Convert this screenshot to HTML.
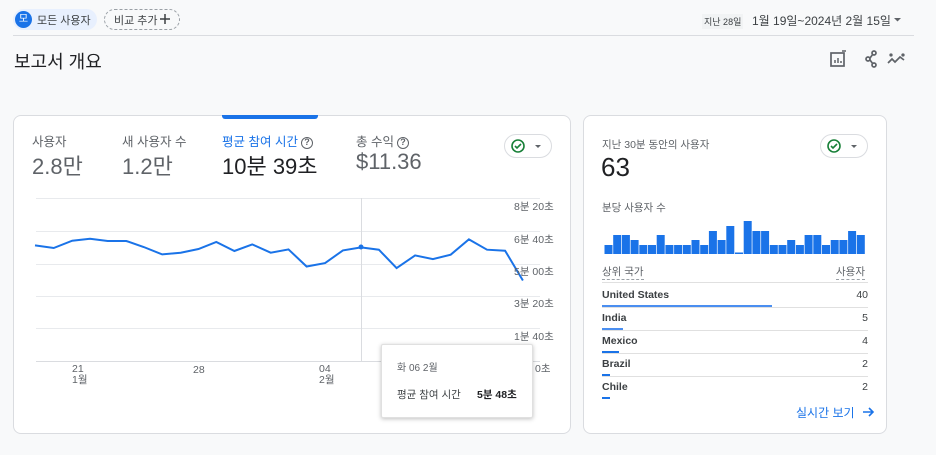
<!DOCTYPE html>
<html><head><meta charset="utf-8"><style>
*{margin:0;padding:0;box-sizing:border-box}
body{width:936px;height:455px;background:#f8f9fa;font-family:"Liberation Sans","Noto Sans CJK KR",sans-serif;color:#202124;position:relative;overflow:hidden}
.a{position:absolute;white-space:nowrap}
.card{position:absolute;background:#fff;border:1px solid #dadce0;border-radius:8px}
.lbl{font-size:12.5px;color:#5f6368}
.val{font-size:22px;color:#5f6368}
.q{display:inline-block;width:12px;height:12px;border:1.5px solid #5f6368;border-radius:50%;font-size:9px;line-height:9px;text-align:center;font-weight:bold;color:#5f6368;vertical-align:1px;margin-left:3px}
.ax{font-size:10.5px;color:#5f6368}
.row{position:absolute;left:602px;width:266px;font-size:10.5px;font-weight:bold;color:#3c4043}
.row span{position:absolute;right:0;font-weight:normal;color:#3c4043}
.hr{position:absolute;left:602px;width:266px;height:1px;background:#e0e0e0}
.ub{position:absolute;left:602px;height:2px;background:#1a73e8}
.pill{position:absolute;width:48px;height:24px;border:1px solid #dadce0;border-radius:12px;background:#fff}
</style></head><body>
<div class="a" style="left:13px;top:9px;width:84px;height:21px;background:#e8f0fe;border-radius:11px"></div>
<div class="a" style="left:15px;top:11px;width:17px;height:17px;background:#1a73e8;border-radius:50%;color:#fff;font-size:10px;text-align:center;line-height:17px">모</div>
<div class="a" style="left:37px;top:12px;font-size:11px;color:#3c4043">모든 사용자</div>
<div class="a" style="left:104px;top:9px;width:76px;height:21px;border:1px dashed #9aa0a6;border-radius:11px"></div>
<div class="a" style="left:114px;top:12px;font-size:11px;color:#3c4043">비교 추가</div>
<svg class="a" style="left:159px;top:13px" width="12" height="12"><path d="M6 1v10M1 6h10" stroke="#3c4043" stroke-width="1.5"/></svg>
<div class="a" style="left:702px;top:14px;font-size:9px;color:#3c4043;background:#f1f3f4;padding:1px 2px">지난 28일</div>
<div class="a" style="left:752px;top:12px;font-size:12px;color:#3c4043">1월 19일~2024년 2월 15일</div>
<svg class="a" style="left:894px;top:17px" width="8" height="6"><path d="M0 1h7l-3.5 3.5z" fill="#5f6368"/></svg>
<div class="a" style="left:13px;top:35px;width:901px;height:1px;background:#dadce0"></div>
<div class="a" style="left:14px;top:48px;font-size:18px;color:#202124">보고서 개요</div>
<svg class="a" style="left:828px;top:49px" width="80" height="20" viewBox="0 0 80 20" fill="none" stroke="#5f6368" stroke-width="1.7">
<rect x="3" y="4" width="13" height="13"/><path d="M7 14v-3M10 14v-5M13 14v-2M14 2l4 0" stroke-width="1.5"/>
<circle cx="40" cy="10" r="2"/><circle cx="46" cy="4" r="2"/><circle cx="46" cy="16" r="2"/><path d="M42 9l3-4M42 11l3 4"/>
<path d="M60 14l4-4 3 3 5-5 4 3" /><circle cx="63" cy="6" r=".8"/><circle cx="75" cy="6" r=".8"/>
</svg>
<div class="card" style="left:13px;top:115px;width:558px;height:319px"></div>
<div class="a" style="left:222px;top:115px;width:96px;height:4px;background:#1a73e8;border-radius:0 0 3px 3px"></div>
<div class="a lbl" style="left:32px;top:131px">사용자</div>
<div class="a val" style="left:32px;top:149px">2.8만</div>
<div class="a lbl" style="left:122px;top:131px">새 사용자 수</div>
<div class="a val" style="left:122px;top:149px">1.2만</div>
<div class="a lbl" style="left:222px;top:131px;color:#1a73e8">평균 참여 시간<span class="q">?</span></div>
<div class="a val" style="left:222px;top:149px;color:#202124">10분 39초</div>
<div class="a lbl" style="left:356px;top:131px">총 수익<span class="q">?</span></div>
<div class="a val" style="left:356px;top:149px">$11.36</div>
<div class="pill" style="left:504px;top:134px"></div>
<svg class="a" style="left:510px;top:138px" width="40" height="16"><circle cx="8" cy="8" r="6" fill="none" stroke="#188038" stroke-width="1.6"/><path d="M5 8l2 2 4-4" stroke="#188038" stroke-width="1.6" fill="none"/><path d="M25 7h6l-3 3z" fill="#5f6368"/></svg>
<svg class="a" style="left:0;top:190px" width="580" height="200">
<g stroke="#e8eaed" stroke-width="1"><line x1="36" x2="540" y1="8.5" y2="8.5"/><line x1="36" x2="540" y1="41.5" y2="41.5"/><line x1="36" x2="540" y1="74.5" y2="74.5"/><line x1="36" x2="540" y1="106.5" y2="106.5"/><line x1="36" x2="540" y1="138.5" y2="138.5"/></g>
<line x1="36" x2="540" y1="171.5" y2="171.5" stroke="#dadce0"/>
<line x1="361.5" x2="361.5" y1="8" y2="171" stroke="#dadce0"/>
<polyline fill="none" stroke="#1a73e8" stroke-width="2" points="35,55.4 53.7,58 72.2,50.7 90,48.7 107.7,51 126.3,51 143.7,57 162.2,64.4 180.7,62.7 198.5,59 216.3,52 234.4,61 252.2,54.4 270.7,62.7 288.5,59.4 306.6,76.5 325.1,73.1 342.9,60.4 361,57.4 378.9,59.7 396.6,78.1 415.1,65.4 432.9,69.1 450.7,64.7 468.9,49.4 487,59.7 505.1,60.7 522.9,90.5"/>
<circle cx="361" cy="57" r="2.5" fill="#1a73e8"/>
</svg>
<div class="a ax" style="left:514px;top:199px">8분 20초</div>
<div class="a ax" style="left:514px;top:232px">6분 40초</div>
<div class="a ax" style="left:514px;top:264px">5분 00초</div>
<div class="a ax" style="left:514px;top:296px">3분 20초</div>
<div class="a ax" style="left:514px;top:329px">1분 40초</div>
<div class="a ax" style="left:535px;top:361px">0초</div>
<div class="a ax" style="left:72px;top:364px;line-height:11px">21<br>1월</div>
<div class="a ax" style="left:193px;top:364px">28</div>
<div class="a ax" style="left:319px;top:364px;line-height:11px">04<br>2월</div>
<div class="a" style="left:381px;top:344px;width:152px;height:74px;background:#fff;border:1px solid #e0e0e0;box-shadow:0 1px 4px rgba(0,0,0,.25);border-radius:2px"></div>
<div class="a" style="left:397px;top:359px;font-size:10px;color:#5f6368">화 06 2월</div>
<div class="a" style="left:397px;top:387px;font-size:10.5px;color:#3c4043">평균 참여 시간</div>
<div class="a" style="left:477px;top:387px;font-size:10.5px;font-weight:bold;color:#202124">5분 48초</div>
<div class="card" style="left:583px;top:115px;width:304px;height:319px"></div>
<div class="a" style="left:602px;top:137px;font-size:10.5px;color:#5f6368">지난 30분 동안의 사용자</div>
<div class="a" style="left:601px;top:152px;font-size:26px;color:#202124">63</div>
<div class="pill" style="left:820px;top:134px"></div>
<svg class="a" style="left:826px;top:138px" width="40" height="16"><circle cx="8" cy="8" r="6" fill="none" stroke="#188038" stroke-width="1.6"/><path d="M5 8l2 2 4-4" stroke="#188038" stroke-width="1.6" fill="none"/><path d="M25 7h6l-3 3z" fill="#5f6368"/></svg>
<div class="a" style="left:602px;top:200px;font-size:10.5px;color:#5f6368">분당 사용자 수</div>
<svg class="a" style="left:604px;top:214px" width="264" height="41" fill="#1a73e8">
<rect x="0.5" y="31" width="8" height="9"/><rect x="9.2" y="21" width="8" height="19"/><rect x="17.9" y="21" width="8" height="19"/><rect x="26.6" y="26" width="8" height="14"/><rect x="35.3" y="31" width="8" height="9"/><rect x="44" y="31" width="8" height="9"/><rect x="52.7" y="21" width="8" height="19"/><rect x="61.4" y="31" width="8" height="9"/><rect x="70.1" y="31" width="8" height="9"/><rect x="78.8" y="31" width="8" height="9"/><rect x="87.5" y="26" width="8" height="14"/><rect x="96.2" y="31" width="8" height="9"/><rect x="104.9" y="17" width="8" height="23"/><rect x="113.6" y="26" width="8" height="14"/><rect x="122.3" y="12" width="8" height="28"/><rect x="131" y="38.5" width="8" height="1.5"/><rect x="139.7" y="7" width="8" height="33"/><rect x="148.4" y="17" width="8" height="23"/><rect x="157.1" y="17" width="8" height="23"/><rect x="165.8" y="31" width="8" height="9"/><rect x="174.5" y="31" width="8" height="9"/><rect x="183.2" y="26" width="8" height="14"/><rect x="191.9" y="31" width="8" height="9"/><rect x="200.6" y="21" width="8" height="19"/><rect x="209.3" y="21" width="8" height="19"/><rect x="218" y="31" width="8" height="9"/><rect x="226.7" y="26" width="8" height="14"/><rect x="235.4" y="26" width="8" height="14"/><rect x="244.1" y="17" width="8" height="23"/><rect x="252.8" y="21" width="8" height="19"/>
</svg>
<div class="a" style="left:602px;top:264px;font-size:10.5px;color:#5f6368;border-bottom:1px dashed #9aa0a6">상위 국가</div>
<div class="a" style="left:836px;top:264px;font-size:10.5px;color:#5f6368;border-bottom:1px dashed #9aa0a6">사용자</div>
<div class="hr" style="top:282px"></div>
<div class="row" style="top:289px">United States<span>40</span></div>
<div class="hr" style="top:307px"></div>
<div class="ub" style="top:305px;width:170px;background:#4a8ef0"></div>
<div class="row" style="top:312px">India<span>5</span></div>
<div class="hr" style="top:330px"></div>
<div class="ub" style="top:328px;width:21px;background:#4a8ef0"></div>
<div class="row" style="top:335px">Mexico<span>4</span></div>
<div class="hr" style="top:353px"></div>
<div class="ub" style="top:351px;width:17px"></div>
<div class="row" style="top:358px">Brazil<span>2</span></div>
<div class="hr" style="top:376px"></div>
<div class="ub" style="top:374px;width:8px"></div>
<div class="row" style="top:381px">Chile<span>2</span></div>
<div class="ub" style="top:397px;width:8px"></div>
<div class="a" style="left:796px;top:404px;font-size:12px;color:#1a73e8">실시간 보기</div>
<svg class="a" style="left:861px;top:405px" width="14" height="14"><path d="M2 7h10M8 3l4 4-4 4" stroke="#1a73e8" stroke-width="1.6" fill="none"/></svg>
</body></html>
